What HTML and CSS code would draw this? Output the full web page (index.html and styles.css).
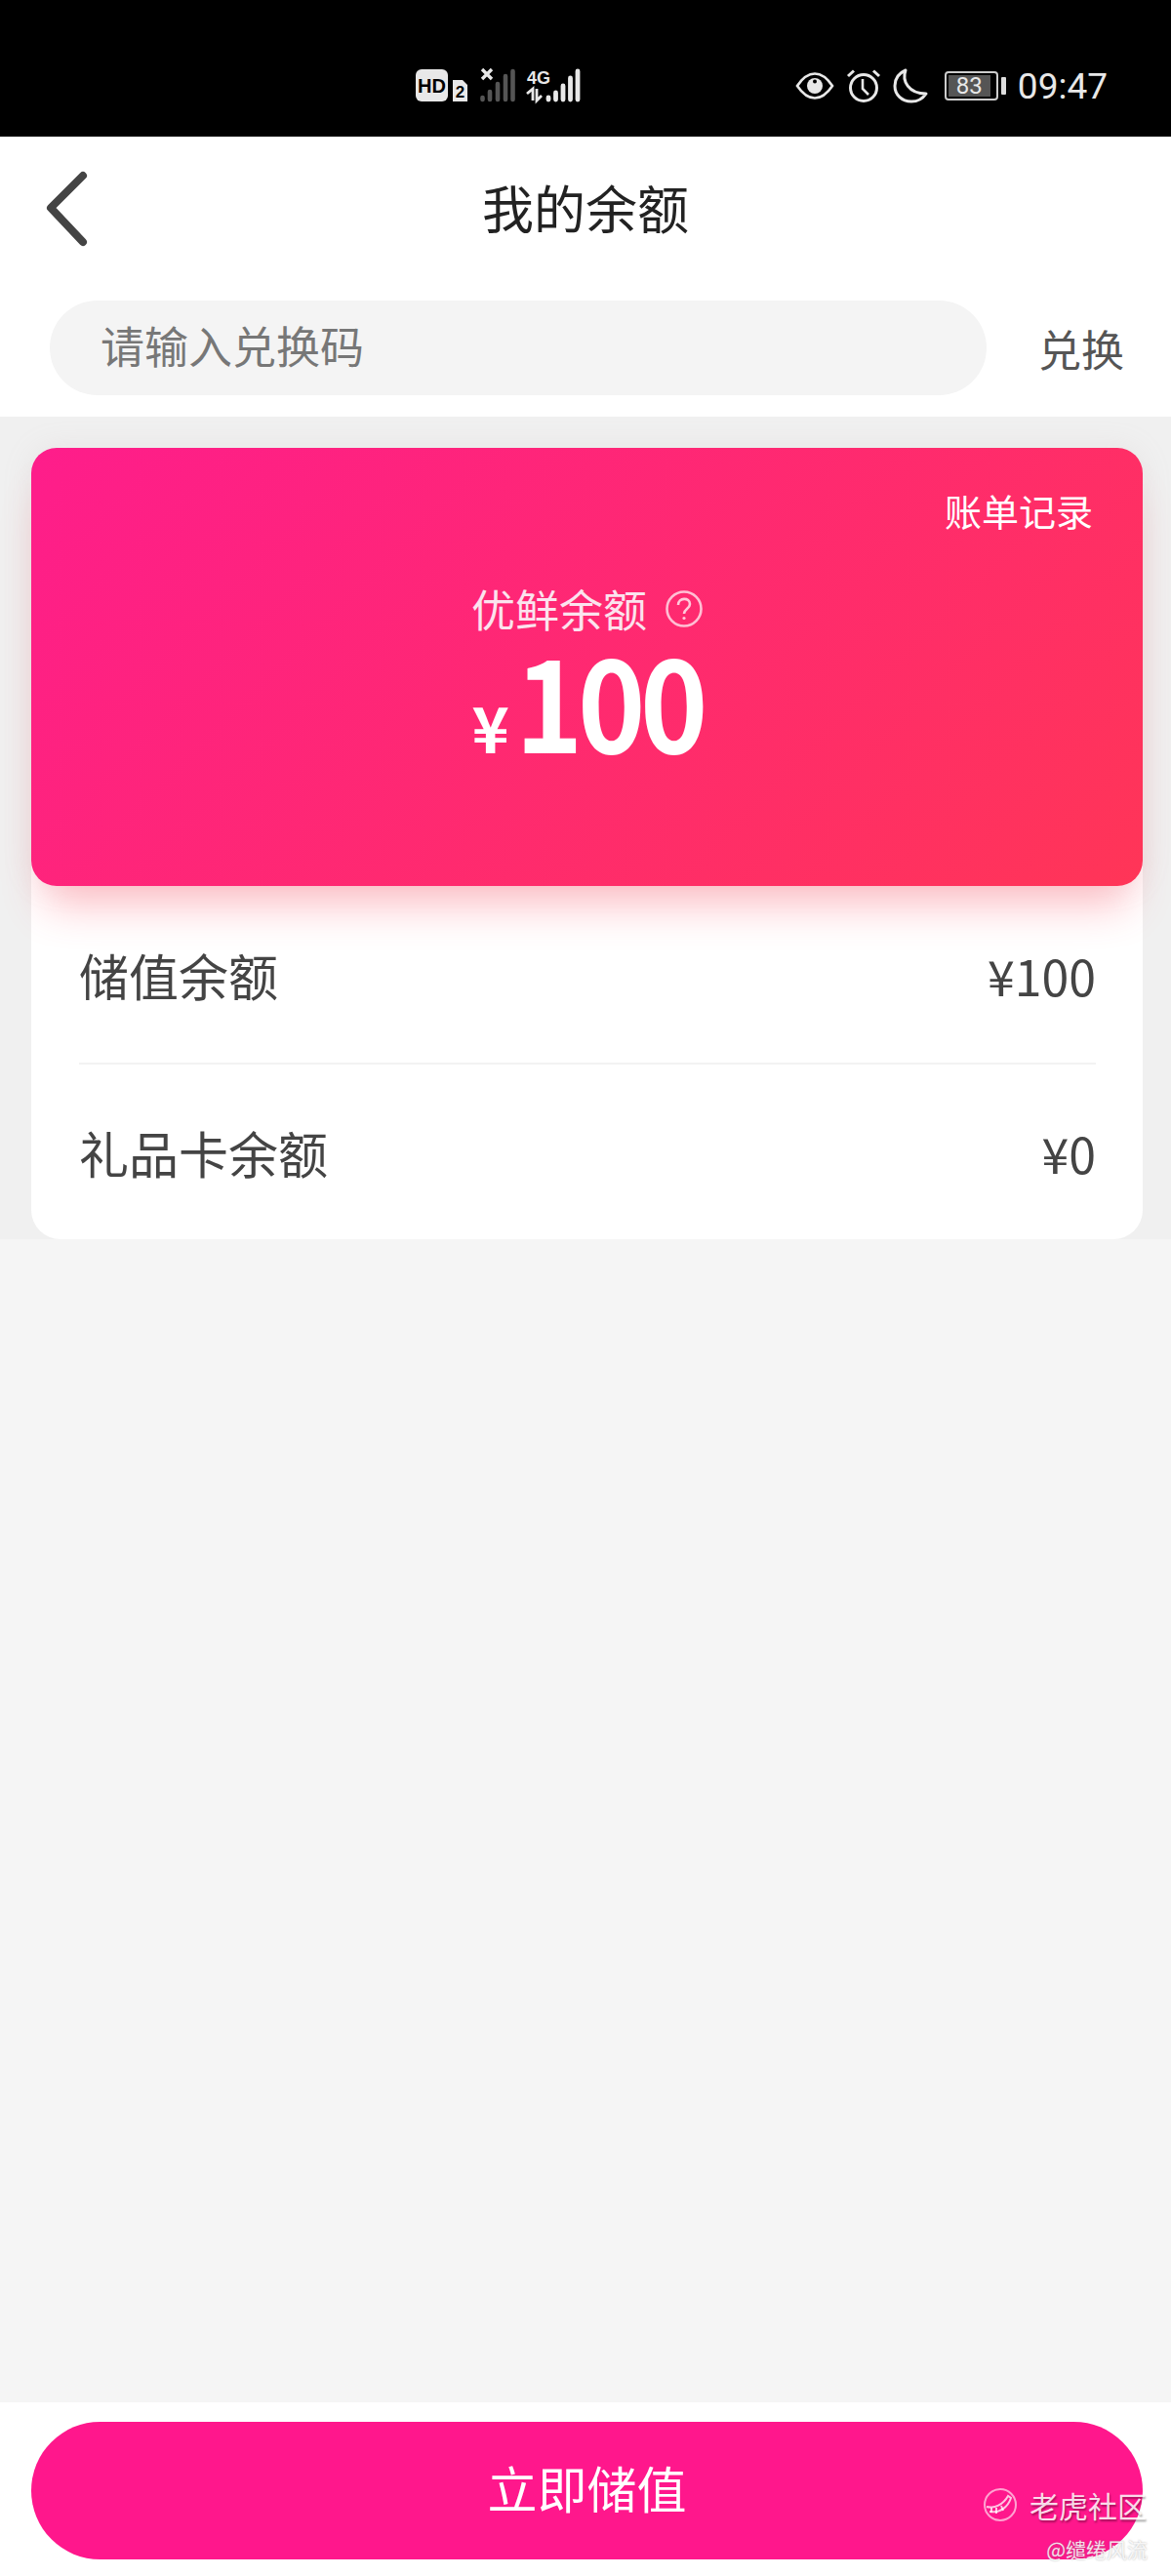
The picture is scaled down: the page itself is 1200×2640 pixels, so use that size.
FILE: index.html
```html
<!DOCTYPE html>
<html lang="zh-CN">
<head>
  <meta charset="UTF-8" />
  <meta name="viewport" content="width=device-width, initial-scale=1.0"/>
  <title>我的余额</title>
  <link rel="stylesheet" href="styles.css">
</head>
<body>

  <div class="status-bar">
    <svg width="170" height="40" viewBox="0 0 170 40">
      <rect x="0" y="3" width="33" height="33" rx="6" fill="#e8e8e8"/>
      <text x="16.5" y="27" class="st-hd">HD</text>
      <path d="M38 14h10l5 5v17H38z" fill="#e8e8e8"/>
      <text x="45.5" y="32" class="st-sim">2</text>
      <!-- sim 1, no service -->
      <path d="M68 3l10 10M78 3L68 13" stroke="#e8e8e8" stroke-width="3.4" fill="none"/>
      <g stroke="#555" stroke-width="4.6" stroke-linecap="round" fill="none">
        <path d="M68.5 32v2M76 26v8M84 18v16M92 10v24M99.500 5v29"/>
      </g>
      <!-- sim 2 -->
      <text x="114" y="18" class="st-4g">4G</text>
      <path d="M114 28l6-5v12M124 23v12l5-5" stroke="#e8e8e8" stroke-width="2.800" fill="none"/>
      <g stroke="#e8e8e8" stroke-width="4.8" stroke-linecap="round" fill="none">
        <path d="M136 32v2M143.500 27v7M151 20v14M158.500 12v22M166 5v29"/>
      </g>
    </svg>

    <div class="status-right">
      <svg width="40" height="30" viewBox="0 0 40 30">
        <path d="M2 15C8 6 13 2.500 20 2.500S32 6 38 15C32 24 27 27.500 20 27.500S8 24 2 15z" fill="none" stroke="#e8e8e8" stroke-width="2.600"/>
        <circle cx="20" cy="15" r="8" fill="#e8e8e8"/>
        <circle cx="20" cy="10.500" r="2" fill="#000"/>
      </svg>
      <svg width="36" height="36" viewBox="0 0 36 36">
        <circle cx="18" cy="20" r="13.500" fill="none" stroke="#e8e8e8" stroke-width="3"/>
        <path d="M17 11v10l6 6" fill="none" stroke="#e8e8e8" stroke-width="2.600"/>
        <path d="M2 8l6-5.500M34 8l-6-5.500" stroke="#e8e8e8" stroke-width="3"/>
      </svg>
      <svg width="36" height="36" viewBox="0 0 36 36">
        <path d="M13 2C9 13 16 26 34 26C30 32 24 34 19 34C9 34 2 27 2 18C2 11 6 5 13 2z" fill="none" stroke="#e8e8e8" stroke-width="3" stroke-linejoin="round"/>
      </svg>
      <div class="battery">
        <div class="battery-body"><span class="battery-fill">83</span></div>
        <div class="battery-tip"></div>
      </div>
      <span class="clock">09:47</span>
    </div>
  </div>

  <div class="header">
    <svg width="48" height="80" viewBox="0 0 48 80">
      <path d="M41 7L8 40l33 35" fill="none" stroke="#444" stroke-width="8" stroke-linecap="round" stroke-linejoin="round"/>
    </svg>
    <h1>我的余额</h1>
  </div>

  <div class="redeem">
    <div class="redeem-input">请输入兑换码</div>
    <span class="redeem-btn">兑换</span>
  </div>

  <div class="balance">
    <div class="balance-card">
      <div class="bill-link">账单记录</div>
      <div class="balance-label">
        <span>优鲜余额</span>
        <svg width="38" height="38" viewBox="0 0 38 38">
          <circle cx="19" cy="19" r="17.500" fill="none" stroke="#fff" stroke-opacity=".7" stroke-width="2.600"/>
          <path d="M13 15c0-8 12-8 12-1 0 5-6 5-6 10" fill="none" stroke="#fff" stroke-opacity=".75" stroke-width="2.600"/>
          <circle cx="19" cy="28.500" r="1.600" fill="#fff" fill-opacity=".75"/>
        </svg>
      </div>
      <div class="balance-amount"><span class="yen">¥</span><span class="num">100</span></div>
    </div>
    <div class="balance-list">
      <div class="balance-row"><span>储值余额</span><span class="row-value">¥100</span></div>
      <div class="balance-row"><span>礼品卡余额</span><span class="row-value">¥0</span></div>
    </div>
  </div>

  <div class="spacer"></div>

  <div class="footer">
    <div class="recharge-btn">立即储值</div>
  </div>

  <div class="watermark">
    <div class="wm-top">
      <svg width="36" height="36" viewBox="0 0 36 36">
        <circle cx="18" cy="18" r="16" fill="none" stroke="#fff" stroke-opacity=".6" stroke-width="2"/>
        <path d="M4 20c8 2 17-2 22-11l3 2c-3 9-11 16-22 14" fill="none" stroke="#fff" stroke-opacity=".75" stroke-width="2"/>
        <path d="M9 21v5M14 21v6M19 19l2 5" stroke="#fff" stroke-opacity=".75" stroke-width="2"/>
      </svg>
      <span>老虎社区</span>
    </div>
    <div class="wm-user">@缱绻风流</div>
  </div>

</body>
</html>
```

FILE: styles.css
```css
body {
  margin: 0;
  width: 1200px;
  min-height: 2640px;
  display: flex;
  flex-direction: column;
  position: relative;
  overflow: hidden;
  background-color: #f5f5f5;
  font-family: "Noto Sans CJK SC", "Noto Sans", sans-serif;
  color: #444;
}

/* status bar */
.status-bar {
  height: 140px;
  background-color: #000;
  display: flex;
  align-items: center;
  justify-content: space-between;
  padding: 36px 65px 0 426px;
  box-sizing: border-box;
  color: #e8e8e8;
}

.st-hd {
  font: 700 20px "Liberation Sans", sans-serif;
  text-anchor: middle;
  fill: #000;
}

.st-sim {
  font: 700 17px "Liberation Sans", sans-serif;
  text-anchor: middle;
  fill: #000;
}

.st-4g {
  font: 700 18px "Liberation Sans Narrow", "Liberation Sans", sans-serif;
  fill: #e8e8e8;
}

.status-right {
  display: flex;
  align-items: center;
  gap: 12px;
}

.battery {
  display: flex;
  align-items: center;
  gap: 3px;
  margin-left: 5px;
}

.battery-body {
  width: 55px;
  height: 30px;
  box-sizing: border-box;
  border: 2px solid #ccc;
  border-radius: 4px;
  padding: 2px;
  display: flex;
}

.battery-fill {
  width: 43px;
  background-color: #555;
  font: 24px/22px Roboto, sans-serif;
  color: #e8e8e8;
  text-align: center;
}

.battery-tip {
  width: 5px;
  height: 18px;
  border-radius: 1px;
  background-color: #ddd;
}

.clock {
  font: 37px Roboto, sans-serif;
}

/* header */
.header {
  height: 150px;
  background-color: #fff;
  display: flex;
  align-items: center;
  padding-left: 44px;
  position: relative;
}

.header svg {
  margin-top: -4px;
}

h1 {
  position: absolute;
  left: 0;
  right: 0;
  margin: -6px 0 0;
  text-align: center;
  font-size: 53px;
  font-weight: 400;
  color: #222;
}

.redeem {
  background-color: #fff;
  display: flex;
  align-items: center;
  justify-content: space-between;
  padding: 18px 48px 22px 51px;
}

.redeem-input {
  width: 960px;
  height: 97px;
  line-height: 91px;
  box-sizing: border-box;
  padding-left: 52px;
  border-radius: 49px;
  background-color: #f4f4f4;
  font-size: 45px;
  color: #777;
}

.redeem-btn {
  font-size: 44px;
  color: #555;
}

/* balance */
.balance {
  background-color: #f0f0f0;
  padding: 32px 29px 0 32px;
}

.balance-card {
  height: 449px;
  box-sizing: border-box;
  position: relative;
  z-index: 1;
  padding-top: 34px;
  border-radius: 26px;
  background: linear-gradient(135deg, #fe1d8b, #ff3557);
  box-shadow: 0 34px 44px -14px rgba(255, 70, 90, 0.33), 0 0 30px rgba(190, 170, 170, 0.15);
  color: #fff;
}

.bill-link {
  text-align: right;
  padding-right: 51px;
  font-size: 38px;
  line-height: 60px;
}

.balance-label {
  margin-top: 46px;
  display: flex;
  align-items: center;
  justify-content: center;
  gap: 19px;
  font-size: 45px;
  line-height: 50px;
  color: #fbe3ee;
}

.balance-amount {
  display: flex;
  align-items: baseline;
  justify-content: center;
  margin-top: 18px;
  font-weight: 700;
  line-height: 100px;
}

.yen {
  font-size: 65px;
  margin-right: 6px;
}

/* digits in the reference are narrower than the font's */
.num {
  display: inline-block;
  font-size: 128px;
  letter-spacing: -6px;
  margin-right: -17px;
  transform: scaleX(0.92);
  transform-origin: left;
}

.balance-list {
  margin-top: -30px;
  padding: 30px 48px 0 49px;
  background-color: #fff;
  border-radius: 0 0 30px 30px;
}

.balance-row {
  height: 181px;
  box-sizing: border-box;
  display: flex;
  align-items: center;
  justify-content: space-between;
  font-size: 51px;
  color: #444;
}

.row-value {
  font-size: 50px;
}

.balance-row + .balance-row {
  border-top: 2px solid #f3f3f3;
}

.spacer {
  flex: 1;
}

/* footer */
.footer {
  background-color: #fff;
  padding: 20px 29px 17px 32px;
}

.recharge-btn {
  height: 141px;
  line-height: 134px;
  border-radius: 71px;
  background-color: #ff178c;
  color: #fff;
  text-align: center;
  font-size: 51px;
}

/* watermark over the button */
.watermark {
  position: absolute;
  left: 1007px;
  width: 169px;
  top: 2548px;
  color: #fff;
}

.wm-top {
  display: flex;
  align-items: center;
  gap: 12px;
  font-size: 30px;
  line-height: 38px;
  white-space: nowrap;
  color: rgba(255, 255, 255, 0.85);
  text-shadow: 1px 2px 2px rgba(0, 0, 0, 0.35);
}

.wm-user {
  margin-top: 13px;
  text-align: right;
  font-size: 21px;
  line-height: 26px;
  color: rgba(255, 255, 255, 0.85);
  text-shadow: 0 0 2px rgba(120, 120, 120, 0.6);
}
```
